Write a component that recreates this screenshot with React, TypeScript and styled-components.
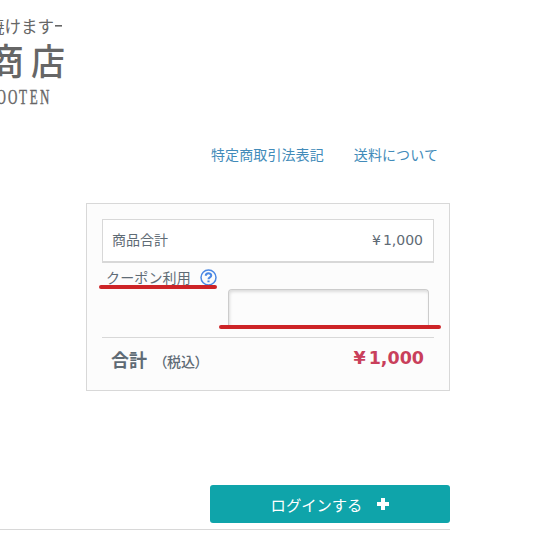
import React from "react";
import styled, { createGlobalStyle } from "styled-components";

const Global = createGlobalStyle`
  * { box-sizing: border-box; }
  body {
    margin: 0;
    background: #fff;
    color: #5f6b75;
    font: 14px/20px "DejaVu Sans", "Noto Sans CJK JP", sans-serif;
    overflow: hidden;
  }
`;
const Page = styled.div`
  width: 549px;
  height: 555px;
  display: flex;
  flex-direction: column;
`;
const Logo = styled.svg`
  display: block;
  width: 70px;
  height: 112px;
  fill: #666;
`;
const Nav = styled.nav`
  display: flex;
  gap: 30px;
  margin: 33px 0 0 211px;
`;
const NavLink = styled.a`
  color: #428bb9;
  line-height: 20px;
  letter-spacing: 0.1px;
  white-space: nowrap;
`;
const Summary = styled.section`
  width: 364px;
  height: 188px;
  margin: 38px 0 0 86px;
  padding: 15px;
  border: 1px solid #d8d8d8;
  background: #fcfcfc;
`;
const Subtotal = styled.div`
  height: 44px;
  padding: 0 10px 2px 9px;
  display: flex;
  align-items: center;
  justify-content: space-between;
  background: #fff;
  border: 1px solid #d8d8d8;
  border-bottom-width: 2px;
`;
const Price = styled.span<{ $total?: boolean }>`
  display: flex;
  gap: ${(p) => (p.$total ? 3 : 2)}px;
  color: ${(p) => (p.$total ? "#c93f5b" : "inherit")};
  font-weight: ${(p) => (p.$total ? 700 : 400)};
  font-size: ${(p) => (p.$total ? 17.5 : 14)}px;
`;
const Coupon = styled.div`
  position: relative;
  height: 74px;
`;
const CouponLabel = styled.div`
  display: flex;
  align-items: center;
  gap: 9px;
  height: 26px;
  padding: 3px 0 0 4px;
  letter-spacing: 0.15px;
`;
const Help = styled.svg`
  width: 17px;
  height: 17px;
`;
const Field = styled.input`
  display: block;
  width: 201px;
  height: 38px;
  margin-left: 126px;
  border: 1px solid #ccc;
  border-width: 1px 1px 0;
  border-radius: 4px 4px 0 0;
  background: #fcfcfc;
  box-shadow: inset 1px 2px 3px #ddd;
  outline: none;
`;
const Mark = styled.i<{ $field?: boolean }>`
  position: absolute;
  left: ${(p) => (p.$field ? 117 : -3)}px;
  top: ${(p) => (p.$field ? 62 : 22)}px;
  width: ${(p) => (p.$field ? 222 : 118)}px;
  height: 4px;
  border-radius: 2px;
  background: #cd2427;
`;
const Total = styled.div`
  height: 44px;
  display: flex;
  align-items: center;
  justify-content: space-between;
  padding: 0 10px 3px 9px;
  border-top: 1px solid #d8d8d8;
`;
const TotalLabel = styled.strong`
  display: flex;
  align-items: baseline;
  padding-top: 6px;
  font-size: 18px;
`;
const Tax = styled.span`
  margin-left: 13px;
  font-size: 14px;
  font-weight: 500;
  font-feature-settings: "palt";
`;
const LoginRow = styled.div`
  width: 450px;
  height: 45px;
  margin-top: 94px;
  padding-left: 210px;
  border-bottom: 1px solid #d8d8d8;
`;
const Login = styled.button`
  display: flex;
  align-items: center;
  justify-content: center;
  gap: 15px;
  width: 240px;
  height: 38px;
  padding: 0 0 1px;
  border: 0;
  border-radius: 3px;
  background: #0fa4aa;
  color: #fff;
  font: 15.3px "Noto Sans CJK JP", sans-serif;
`;

export default function App() {
  return (
    <Page>
      <Global />
      <Logo viewBox="0 0 70 112" fontFamily="'Noto Sans CJK JP', sans-serif">
        <text x="-12" y="33" fontSize="16.5">焼けます</text>
        <rect x="55" y="25" width="7" height="1.6" />
        <text x="-12" y="75" fontSize="36" fontWeight="500">商</text>
        <text x="31" y="75" fontSize="36" fontWeight="500" textLength="34" lengthAdjust="spacingAndGlyphs">店</text>
        <text
          transform="scale(0.62 1)"
          x="2 20.5 37 54.5 72"
          y="104"
          fontSize="21"
          fontFamily="'Liberation Serif', serif"
          stroke="#666"
          strokeWidth="0.4"
          textAnchor="middle"
        >
          OOTEN
        </text>
      </Logo>
      <Nav>
        <NavLink>特定商取引法表記</NavLink>
        <NavLink>送料について</NavLink>
      </Nav>
      <Summary>
        <Subtotal>
          <span>商品合計</span>
          <Price><span>¥</span><span>1,000</span></Price>
        </Subtotal>
        <Coupon>
          <CouponLabel>
            クーポン利用
            <Help viewBox="0 0 17 17" fill="none" stroke="#4b88e4">
              <circle cx="8.500" cy="8.500" r="7.500" strokeWidth="1.5" />
              <path d="M5.800 6.800C5.800 3.400 11.200 3.500 11.200 6.500C11.200 8.400 8.500 8.200 8.500 10.300M8.500 11.400V13.300" strokeWidth="2.1" />
            </Help>
          </CouponLabel>
          <Field aria-label="クーポン利用" />
          <Mark />
          <Mark $field />
        </Coupon>
        <Total>
          <TotalLabel>合計<Tax>（税込）</Tax></TotalLabel>
          <Price $total><span>¥</span><span>1,000</span></Price>
        </Total>
      </Summary>
      <LoginRow>
        <Login>
          ログインする
          <svg width="12" height="12" viewBox="0 0 12 12" fill="#fff">
            <path d="M4 0H8V4H12V8H8V12H4V8H0V4H4Z" />
          </svg>
        </Login>
      </LoginRow>
    </Page>
  );
}
